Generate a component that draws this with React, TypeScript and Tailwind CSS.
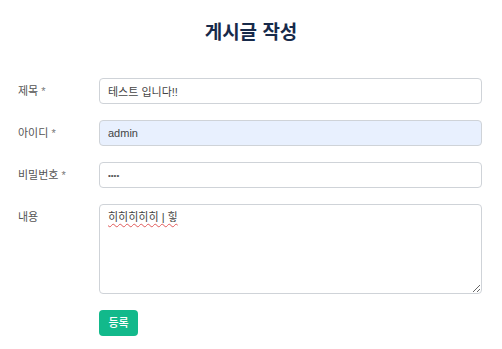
import React from 'react';

const font = { fontFamily: "'Liberation Sans', 'Noto Sans CJK KR', sans-serif" };

const Row = ({ label, required, children }: { label: string; required?: boolean; children: React.ReactNode }) => (
  <div className="flex items-start">
    <div className="w-[81px] h-[26px] flex items-center text-[11px] text-[#555]">
      {label}
      {required && <span className="ml-[3px] text-[#777]">*</span>}
    </div>
    <div className="flex-1">{children}</div>
  </div>
);

const inputCls =
  'block w-full h-[26px] px-[8px] rounded-[4px] border border-[#cfd3d8] text-[11px] text-[#444] outline-none';

export default function App() {
  return (
    <div className="w-[502px] h-[349px] bg-white" style={font}>
      <h1 className="pt-[19px] text-center text-[19px] leading-[28px] font-bold text-[#172a4a]">게시글 작성</h1>
      <form className="mt-[31px] pl-[18px] pr-[20px] flex flex-col gap-[16px]" onSubmit={(e) => e.preventDefault()}>
        <Row label="제목" required>
          <input className={inputCls + ' bg-white'} defaultValue="테스트 입니다!!" />
        </Row>
        <Row label="아이디" required>
          <input className={inputCls + ' bg-[#e8f0fe]'} defaultValue="admin" />
        </Row>
        <Row label="비밀번호" required>
          <input
            type="password"
            className="block w-full h-[26px] px-[8px] rounded-[4px] border border-[#cfd3d8] text-[8px] text-[#555] bg-white outline-none"
            defaultValue="1234"
          />
        </Row>
        <Row label="내용">
          <textarea
            className="block w-full h-[90px] px-[8px] py-[5px] rounded-[4px] border border-[#cfd3d8] text-[11px] leading-[15px] text-[#444] outline-none resize-y underline decoration-wavy decoration-[#e05a5a] decoration-1 underline-offset-2"
            defaultValue="히히히히히 | 힣"
          />
        </Row>
        <div className="pl-[81px]">
          <button
            type="submit"
            className="h-[26px] w-[39px] rounded-[4px] bg-[#12b98b] text-white text-[11px] font-medium"
          >
            등록
          </button>
        </div>
      </form>
    </div>
  );
}
